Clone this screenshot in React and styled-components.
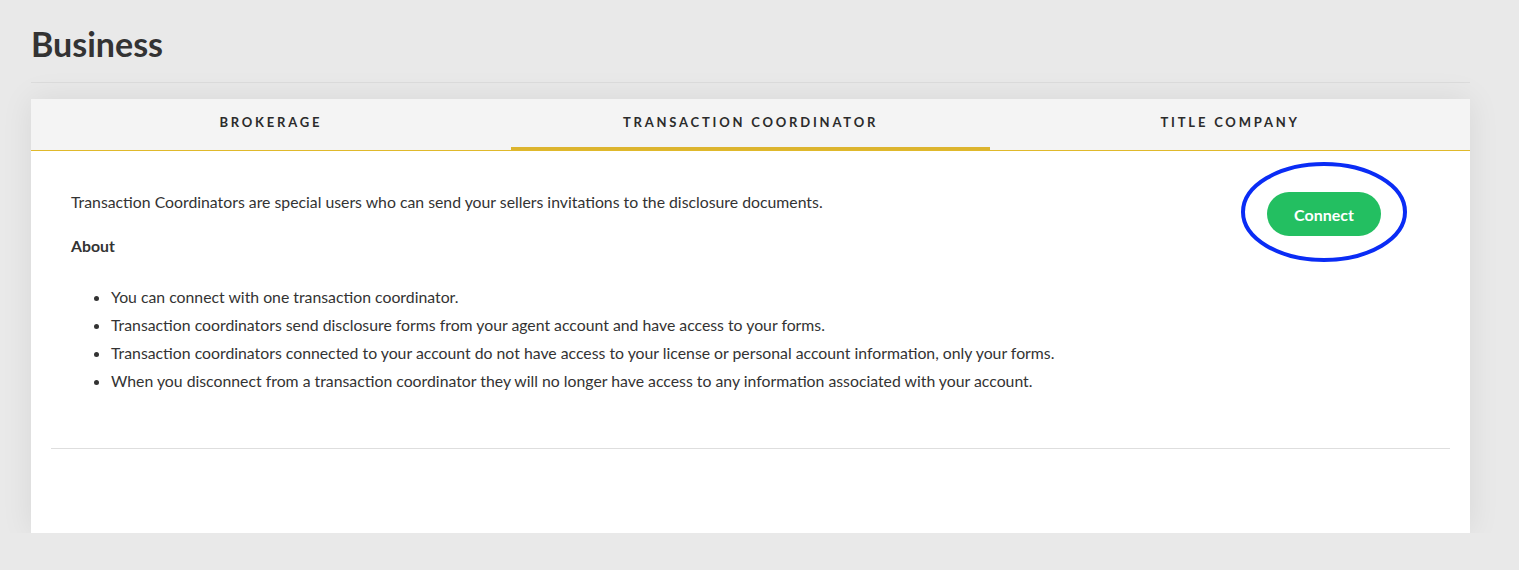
import React from 'react';
import styled, { createGlobalStyle } from 'styled-components';

const GlobalStyle = createGlobalStyle`
  body {
    margin: 0;
    background: #e9e9e9;
    font-family: Lato, "Liberation Sans", sans-serif;
    color: #333;
  }
`;

const Page = styled.div`
  padding: 0 49px 0 31px;
`;

const Title = styled.h1`
  margin: 0;
  padding-top: 24px;
  padding-bottom: 18px;
  font-size: 34px;
  line-height: 40px;
  font-weight: 700;
  color: #333;
  border-bottom: 1px solid #dcdcdc;
`;

const Card = styled.div`
  margin-top: 16px;
  background: #fff;
  box-shadow: 0 0 30px rgba(0, 0, 0, 0.08);
  height: 434px;
  display: flex;
  flex-direction: column;
`;

const Tabs = styled.div`
  display: grid;
  grid-template-columns: repeat(3, 1fr);
  background: #f4f4f4;
  border-bottom: 1px solid #e0b92b;
  height: 51px;
`;

const Tab = styled.div`
  display: flex;
  align-items: center;
  justify-content: center;
  font-size: 13px;
  font-weight: 700;
  letter-spacing: 2.8px;
  color: #2b2b2b;
  box-shadow: ${p => (p.$active ? 'inset 0 -3px 0 #dcb42e' : 'none')};
  padding-bottom: 5px;
`;

const Body = styled.div`
  padding: 40px 40px 0;
  display: flex;
  justify-content: space-between;
`;

const Text = styled.div`
  font-size: 15.8px;
  line-height: 22px;
  color: #333;
`;

const Intro = styled.p`
  margin: 0;
`;

const About = styled.h4`
  margin: 22px 0 0;
  font-size: 15.8px;
  font-weight: 700;
`;

const List = styled.ul`
  margin: 26px 0 0;
  padding-left: 40px;
  li {
    line-height: 28px;
  }
`;

const ConnectWrap = styled.div`
  position: relative;
  margin: 1px 49px 0 0;
  width: 114px;
  height: 44px;
`;

const ConnectButton = styled.button`
  width: 114px;
  height: 44px;
  border: 0;
  border-radius: 22px;
  background: #23bf61;
  color: #fff;
  font-family: Lato, "Liberation Sans", sans-serif;
  font-size: 16px;
  font-weight: 700;
`;

const Ring = styled.svg`
  position: absolute;
  left: -27px;
  top: -31px;
  pointer-events: none;
`;

const Divider = styled.hr`
  margin: 53px 20px 0;
  border: 0;
  border-top: 1px solid #dedede;
`;

export default function App() {
  return (
    <Page>
      <GlobalStyle />
      <Title>Business</Title>
      <Card>
        <Tabs>
          <Tab>BROKERAGE</Tab>
          <Tab $active>TRANSACTION COORDINATOR</Tab>
          <Tab>TITLE COMPANY</Tab>
        </Tabs>
        <Body>
          <Text>
            <Intro>Transaction Coordinators are special users who can send your sellers invitations to the disclosure documents.</Intro>
            <About>About</About>
            <List>
              <li>You can connect with one transaction coordinator.</li>
              <li>Transaction coordinators send disclosure forms from your agent account and have access to your forms.</li>
              <li>Transaction coordinators connected to your account do not have access to your license or personal account information, only your forms.</li>
              <li>When you disconnect from a transaction coordinator they will no longer have access to any information associated with your account.</li>
            </List>
          </Text>
          <ConnectWrap>
            <ConnectButton>Connect</ConnectButton>
            <Ring width="168" height="104" viewBox="0 0 168 104">
              <ellipse cx="84" cy="51" rx="81" ry="48" fill="none" stroke="#0a2cf5" strokeWidth="4" />
            </Ring>
          </ConnectWrap>
        </Body>
        <Divider />
      </Card>
    </Page>
  );
}
